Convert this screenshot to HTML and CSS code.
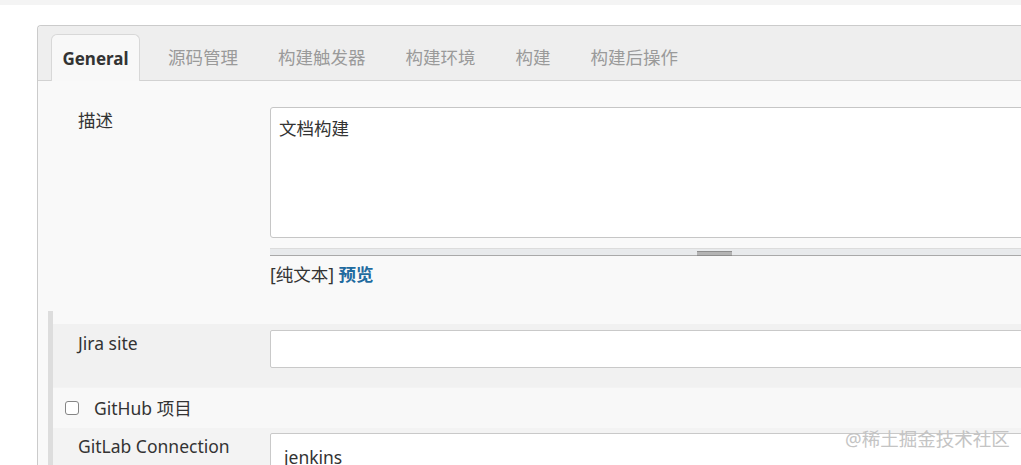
FILE: index.html
```html
<!DOCTYPE html>
<html lang="zh-CN">
<head>
    <meta charset="UTF-8">
    <meta name="viewport" content="width=device-width, initial-scale=1.0">
    <title>文档构建 Config</title>
    <link rel="stylesheet" href="styles.css">
</head>
<body>
    <div class="page">
        <div class="top-strip"></div>

        <div class="config-panel">
            <div class="tab-bar">
                <div class="tab active">General</div>
                <div class="tab">源码管理</div>
                <div class="tab">构建触发器</div>
                <div class="tab">构建环境</div>
                <div class="tab">构建</div>
                <div class="tab">构建后操作</div>
            </div>

            <div class="tab-content">
                <div class="desc-row">
                    <div class="label desc-label">描述</div>
                    <div class="field">
                        <textarea class="desc-input" readonly>文档构建</textarea>
                        <div class="resize-bar"><span class="grip"></span></div>
                        <div class="markup">[纯文本] <a href="#" class="preview-link">预览</a></div>
                    </div>
                </div>

                <div class="section">
                    <div class="section-gap"></div>
                    <div class="form-row jira-row">
                        <div class="label">Jira site</div>
                        <div class="field"><input type="text" class="text-input"></div>
                    </div>
                    <div class="check-row">
                        <input type="checkbox" class="check">
                        <span class="check-label">GitHub 项目</span>
                    </div>
                    <div class="form-row gitlab-row">
                        <div class="label">GitLab Connection</div>
                        <div class="field"><input type="text" class="text-input" value="jenkins"></div>
                    </div>
                </div>
            </div>
        </div>

        <div class="watermark">@稀土掘金技术社区</div>
    </div>
</body>
</html>
```

FILE: styles.css
```css
html, body {
    margin: 0;
    overflow: hidden;
}

body {
    background: #fff;
    font-family: "Noto Sans", "Noto Sans CJK SC", sans-serif;
    font-size: 17.5px;
    color: #333;
}

.page {
    position: relative;
    width: 1021px;
    height: 465px;
    overflow: hidden;
}

.top-strip {
    height: 5px;
    background: #f4f4f4;
}

.config-panel {
    margin: 20px 0 0 37px;
    width: 1131px;
    border: 1px solid #cbcbcb;
    border-right: none;
    border-radius: 4px 0 0 0;
    background: #f9f9f9;
}

/* Tabs */
.tab-bar {
    display: flex;
    align-items: flex-end;
    height: 54px;
    padding-left: 13px;
    background: #eeeeee;
    border-bottom: 1px solid #d2d2d2;
    border-radius: 4px 0 0 0;
}

.tab {
    height: 46px;
    line-height: 46px;
    padding: 0 20px;
    color: #9a9a9a;
    white-space: nowrap;
}

.tab.active {
    box-sizing: border-box;
    width: 89px;
    padding: 1px 0 0;
    margin-right: 8px;
    text-align: center;
    color: #333;
    font-weight: bold;
    font-size: 17px;
    background: #f8f8f8;
    border: 1px solid #d8d8d8;
    border-bottom: none;
    border-radius: 6px 6px 0 0;
    margin-bottom: -1px;
    height: 47px;
}

.tab-content {
    padding-top: 26px;
    height: 360px;
}

/* Rows */
.label {
    line-height: 24px;
    color: #333;
}

.desc-row {
    display: grid;
    grid-template-columns: 192px 1fr;
    padding: 0 10px 0 40px;
}

.desc-label {
    padding-top: 1px;
}

.desc-input {
    display: block;
    box-sizing: border-box;
    width: 100%;
    height: 131px;
    margin: 0;
    padding: 8px 8px;
    font: inherit;
    line-height: 24px;
    color: #333;
    background: #fff;
    border: 1px solid #c6c6c6;
    border-radius: 3px;
    resize: none;
    outline: none;
}

.resize-bar {
    display: flex;
    justify-content: center;
    margin-top: 10px;
    height: 6px;
    background: #e8eaec;
    border-top: 1px solid #dcdcdc;
    border-bottom: 1px solid #a9a9a9;
}

.grip {
    width: 35px;
    height: 3px;
    margin-top: 2px;
    border-top: 1px solid #8e8e8e;
    border-bottom: 1px solid #8e8e8e;
    background: #b4b4b4;
}

.markup {
    margin-top: 6px;
    line-height: 24px;
    color: #333;
}

.preview-link {
    color: #1f6b9f;
    font-weight: bold;
    text-decoration: none;
}

/* Nested section with left rule */
.section {
    margin: 25px 0 0 10px;
    border-left: 5px solid #dddddd;
}

.section-gap {
    height: 13px;
}

.form-row {
    display: grid;
    grid-template-columns: 192px 1fr;
    padding: 0 10px 0 25px;
}

.jira-row {
    height: 63px;
    box-sizing: border-box;
    padding-top: 6px;
    background: #f1f1f1;
}

.jira-row .label {
    padding-top: 1px;
}

.text-input {
    display: block;
    box-sizing: border-box;
    width: 100%;
    height: 38px;
    margin: 0;
    padding: 0 13px;
    font: inherit;
    color: #333;
    background: #fff;
    border: 1px solid #c9c9c9;
    border-radius: 2px;
    outline: none;
}

.check-row {
    display: flex;
    align-items: center;
    height: 40px;
    padding-left: 12px;
    background: #f8f8f8;
    border-top: 1px solid #f3f3f3;
}

.check {
    appearance: none;
    -webkit-appearance: none;
    box-sizing: border-box;
    width: 14px;
    height: 14px;
    margin: 0 15px 0 0;
    background: #fff;
    border: 1px solid #858585;
    border-radius: 3px;
}

.check-label {
    line-height: 24px;
}

.gitlab-row {
    padding-top: 5px;
    background: #f3f3f3;
    height: 60px;
}

.gitlab-row .label {
    padding-top: 1px;
}

.gitlab-row .text-input {
    padding-top: 8px;
    height: 40px;
}

/* Site watermark over content */
.watermark {
    position: absolute;
    left: 845px;
    top: 427px;
    font-size: 18.5px;
    line-height: 24px;
    color: #c4c4c4;
    white-space: nowrap;
}
```
